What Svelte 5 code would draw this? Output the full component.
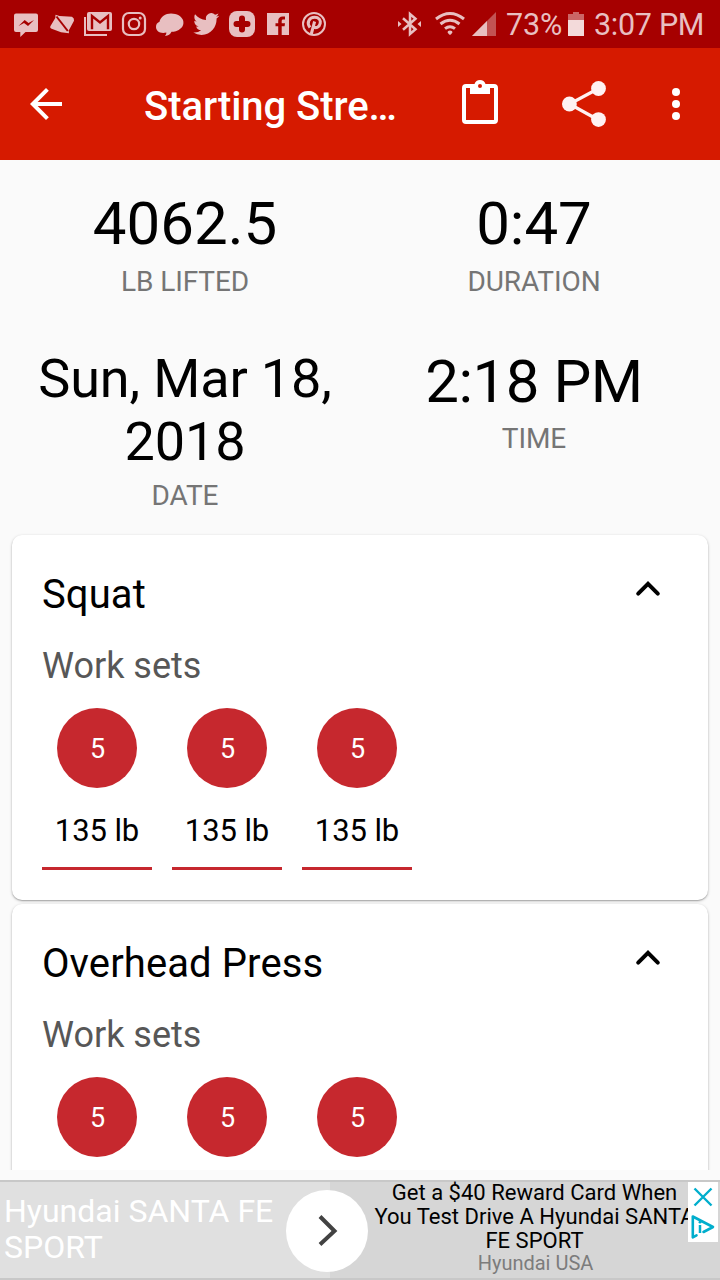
<script>
  const stats = [
    { value: '4062.5', label: 'LB LIFTED' },
    { value: '0:47', label: 'DURATION' },
    { value: 'Sun, Mar 18, 2018', label: 'DATE', small: true },
    { value: '2:18 PM', label: 'TIME', tight: true }
  ];
  const exercises = [
    { name: 'Squat', sets: [5, 5, 5], weight: '135 lb' },
    { name: 'Overhead Press', sets: [5, 5, 5] }
  ];
</script>

<div class="screen">
  <div class="status">
    <div class="notes">
      <svg viewBox="0 0 36 48"><path fill="currentColor" d="M8 13.500h20q2 0 2 2V30q0 2-2 2H17.500l-5.200 5V32H8q-2 0-2-2V15.500q0-2 2-2z"/><path fill="#a60000" d="M10.500 26l6.200-6 3.800 3 5.500-3-6 6-4-3z"/></svg>
      <svg viewBox="0 0 36 48"><path fill="currentColor" d="M11.500 14.800l4 1.200 12.500.7q2.500 1.300 2 4L25.700 28.700l-1 1.800.3 2.700-8-1-8.700-3.200q-3-1-1.800-3L11.300 18z"/><path d="M12.500 16.500L23.800 31" stroke="#a60000" stroke-width="2"/></svg>
      <svg viewBox="0 0 36 48"><path fill="none" stroke="currentColor" stroke-width="2" d="M5 17v18h22"/><rect x="7" y="12" width="25" height="19" rx="2" fill="currentColor"/><path d="M12 29.200V16l8 6.500 8-6.500v13.200" fill="none" stroke="#a60000" stroke-width="2.400"/></svg>
      <svg viewBox="0 0 36 48"><rect x="7" y="13" width="22" height="22" rx="6" fill="none" stroke="currentColor" stroke-width="2.200"/><circle cx="18" cy="24" r="5.200" fill="none" stroke="currentColor" stroke-width="2.200"/><circle cx="24.200" cy="18" r="1.500" fill="currentColor"/></svg>
      <svg viewBox="0 0 36 48"><path fill="currentColor" d="M19 13.500c6 0 10.500 2.800 12 6.500 1.500 5-1 8.500-6 10.800-2 1-4 1.200-5.500 1-1.300 2.500-3 3.900-6.500 4.200 1-1 1.500-2.300 1.300-3.400C8 34 4 31 4 27c0-2.500 1-4.200 3.500-5.200 1-5 6-8.300 11.500-8.300z"/></svg>
      <svg viewBox="0 0 36 48"><path fill="currentColor" transform="translate(5.300 10.600) scale(1.080 1.120)" d="M23.953 4.570a10 10 0 01-2.825.775 4.958 4.958 0 002.163-2.723c-.951.555-2.005.959-3.127 1.184a4.920 4.920 0 00-8.384 4.482C7.690 8.095 4.067 6.130 1.640 3.162a4.822 4.822 0 00-.666 2.475c0 1.710.870 3.213 2.188 4.096a4.904 4.904 0 01-2.228-.616v.060a4.923 4.923 0 003.946 4.827 4.996 4.996 0 01-2.212.085 4.936 4.936 0 004.604 3.417 9.867 9.867 0 01-6.102 2.105c-.390 0-.779-.023-1.170-.067a13.995 13.995 0 007.557 2.209c9.053 0 13.998-7.496 13.998-13.985 0-.210 0-.420-.015-.630A9.935 9.935 0 0024 4.590z"/></svg>
      <svg viewBox="0 0 36 48"><rect x="5" y="11" width="26" height="26" rx="8" fill="currentColor"/><path d="M18 18.500v11M12.500 24h11" stroke="#a60000" stroke-width="6" stroke-linecap="round"/></svg>
      <svg viewBox="0 0 36 48"><path fill="currentColor" d="M7 13h22v22H7z"/><path fill="#a60000" d="M18.200 35v-8.700h-2.700v-3.100h2.700v-2.100c0-3.200 1.700-4.700 4.500-4.700H25v3h-1.600c-1.300 0-1.700.6-1.700 1.700v2.100H25l-.4 3.100h-2.900V35z"/></svg>
      <svg viewBox="0 0 36 48"><circle cx="18" cy="24" r="11" fill="none" stroke="currentColor" stroke-width="2"/><path d="M14 27.500c-4-5-.5-10.300 4.500-10.300 4.400 0 6.400 3 5.700 6.200-.8 4-4.700 5.400-6.800 3M18.600 21.500L15.300 34" fill="none" stroke="currentColor" stroke-width="3"/></svg>
    </div>
    <div class="system">
      <svg class="bt" viewBox="0 0 24 48"><path d="M5 18.300l12.500 10.900L12 34V14l5.500 4.800L5 29.700" fill="none" stroke="currentColor" stroke-width="2.500"/><path fill="currentColor" d="M0 21l3.500 3L0 27zM23 21l-3.500 3 3.500 3z"/></svg>
      <svg class="wifi" viewBox="0 0 30 48"><g fill="none" stroke="currentColor" stroke-width="3"><path d="M1 19q14-11 28 0M5.500 24q9.500-7.500 19 0M10 28.700q5-4 10 0"/></g><path fill="currentColor" d="M15 30.500q2.500 0 2.500 1.800Q16 35 15 35t-2.500-2.700q0-1.800 2.500-1.800z"/></svg>
      <svg class="signal" viewBox="0 0 24 48"><path fill="#c25353" d="M24 12v24H0z"/><path fill="currentColor" d="M15 21v15H0z"/></svg>
      <span class="pct">73%</span>
      <svg class="battery" viewBox="0 0 16 48"><path fill="#cb6666" d="M0 14h5v-2h6v2h5v6H0z"/><path fill="#f3dada" d="M0 20h16v16H0z"/></svg>
      <span class="clock">3:07 PM</span>
    </div>
  </div>

  <header>
    <svg class="back" viewBox="0 0 24 24"><path fill="#fff" d="M20 11H7.830l5.590-5.590L12 4l-8 8 8 8 1.410-1.410L7.830 13H20z"/></svg>
    <h1>Starting Stre…</h1>
    <svg class="clip" viewBox="0 0 36 44"><path fill="#fff" fill-rule="evenodd" d="M4 4h8.500a5.800 5.800 0 0 1 11 0H32q4 0 4 4v32q0 4-4 4H4q-4 0-4-4V8q0-4 4-4zm0 4v32h28V8h-4v6H8V8zM18 4a2 2 0 1 0 0 4 2 2 0 0 0 0-4z"/></svg>
    <svg class="share" viewBox="0 0 44 46"><path d="M36.500 7.500L7.500 23l29 16" fill="none" stroke="#fff2f2" stroke-width="3.200"/><g fill="#fff2f2"><circle cx="36.500" cy="7.500" r="7.400"/><circle cx="7.400" cy="23" r="7.400"/><circle cx="36.500" cy="38.600" r="7.400"/></g></svg>
    <svg class="more" viewBox="0 0 8 32"><g fill="#fff"><circle cx="4" cy="4" r="4"/><circle cx="4" cy="16" r="4"/><circle cx="4" cy="28" r="4"/></g></svg>
  </header>

  <main>
    <section class="stats">
      {#each stats as s}
        <div class="stat">
          <div class="value" class:small={s.small} class:tight={s.tight}>{s.value}</div>
          <div class="label">{s.label}</div>
        </div>
      {/each}
    </section>
    {#each exercises as e}
      <article>
        <div class="head">
          <h2>{e.name}</h2>
          <svg viewBox="0 0 24 24"><path d="M7.100 14.300L12 9.400l4.900 4.900" fill="none" stroke="#000" stroke-width="2" stroke-linecap="round"/></svg>
        </div>
        <h3>Work sets</h3>
        <div class="sets">
          {#each e.sets as reps}
            <div class="set">
              <div class="reps">{reps}</div>
              {#if e.weight}<div class="weight">{e.weight}</div>{/if}
            </div>
          {/each}
        </div>
      </article>
    {/each}
  </main>

  <aside>
    <div class="brand">Hyundai SANTA FE<br />SPORT</div>
    <div class="copy">
      <div class="offer">Get a $40 Reward Card When<br />You Test Drive A Hyundai SANTA<br />FE SPORT</div>
      <div class="by">Hyundai USA</div>
    </div>
    <div class="go"><svg viewBox="0 0 82 82"><path d="M34 26.500L48.500 41 34 54.500" fill="none" stroke="#424242" stroke-width="4"/></svg></div>
    <div class="choices">
      <svg viewBox="0 0 30 60"><g fill="none" stroke="#00aecd"><path stroke-width="2.400" d="M6.500 6.500l17 17M23.500 6.500l-17 17"/><path stroke-width="2.600" stroke-linejoin="round" stroke-linecap="round" d="M8.500 53.300L4.800 55.300V34.500L25 45l-9.500 5"/><path stroke-width="2.500" d="M12 43v8"/></g><circle cx="12" cy="40.200" r="1.400" fill="#00aecd"/></svg>
    </div>
  </aside>
</div>

<style>
  :global(body) { margin: 0; }
  .screen { width: 720px; height: 1280px; overflow: hidden; display: flex; flex-direction: column; background: #fafafa; font-family: Roboto, sans-serif; color: #000; }
  svg { display: block; flex: none; }
  h1, h2, h3 { margin: 0; font-weight: 400; }
  .status { height: 48px; flex: none; background: #a60000; color: #e8bfc1; display: flex; justify-content: space-between; padding: 0 16px 0 8px; }
  .notes, .system { display: flex; }
  .notes svg { width: 36px; height: 48px; }
  .system svg { height: 48px; }
  .system span { font-size: 30.500px; line-height: 50px; white-space: nowrap; }
  .bt { width: 24px; margin-right: 13px; }
  .wifi { width: 30px; margin-right: 7px; }
  .signal { width: 24px; margin-right: 10px; }
  .pct { width: 55px; margin-right: 7px; letter-spacing: -.2px; }
  .battery { width: 16px; margin-right: 10px; }
  .system .clock { width: 110px; letter-spacing: -.3px; }
  header { height: 112px; flex: none; background: #d61a00; display: flex; align-items: center; padding-left: 22px; }
  .back { width: 48px; height: 48px; }
  h1 { width: 318px; margin-left: 74px; padding-top: 6px; color: #fff; font-weight: 500; font-size: 40px; line-height: 48px; white-space: nowrap; letter-spacing: -.06px; }
  .clip { width: 36px; height: 44px; margin-top: -4px; }
  .share { width: 44px; height: 46px; margin-left: 64px; }
  .more { width: 8px; height: 32px; margin-left: 66px; }
  main { height: 1010px; flex: none; overflow: hidden; }
  .stats { display: grid; grid-template-columns: 350px 348px; padding: 28px 0 0 10px; height: 347px; grid-template-rows: 158px 189px; }
  .stat { text-align: center; }
  .value { font-size: 60px; line-height: 72px; padding-bottom: 5px; }
  .value.tight { letter-spacing: -.5px; padding-bottom: 4px; }
  .value.small { font-size: 54px; line-height: 63px; padding: 1px 25px 6px; letter-spacing: -.15px; }
  .label { font-size: 28px; line-height: 33px; color: #757575; letter-spacing: -.1px; }
  article { height: 365px; margin: 0 12px 4px; background: #fff; border-radius: 10px; box-shadow: 0 1px 3px rgba(0,0,0,.26), 0 1px 1px rgba(0,0,0,.16); padding: 30px; box-sizing: border-box; }
  .head { display: flex; justify-content: space-between; height: 77px; }
  h2 { font-size: 40px; line-height: 60px; letter-spacing: .1px; }
  .head svg { width: 48px; height: 48px; margin-right: 6px; }
  h3 { font-size: 36px; line-height: 48px; color: #575757; height: 66px; }
  .sets { display: flex; gap: 20px; }
  .set { width: 110px; height: 162px; box-sizing: border-box; border-bottom: 3px solid #c6282e; }
  .reps { width: 80px; height: 80px; margin: 0 auto; border-radius: 50%; background: #c6282e; color: #fff; font-size: 27px; line-height: 83px; text-align: center; text-indent: 1px; }
  .weight { font-size: 31px; line-height: 40px; margin-top: 23px; text-align: center; letter-spacing: -.1px; }
  aside { position: relative; height: 100px; margin-top: 10px; box-sizing: border-box; border-top: 2px solid #c8c8c8; border-bottom: 2px solid #c8c8c8; display: flex; flex: none; }
  .brand { width: 330px; box-sizing: border-box; padding: 11px 0 0 4px; background: #e0e0e0; color: #fff; font-size: 32px; line-height: 36px; white-space: nowrap; }
  .copy { flex: 1; background: #d6d6d6; text-align: center; padding: 0 13px 0 34px; white-space: nowrap; }
  .offer { font-size: 22px; line-height: 24px; margin: -1px -9px 0 -11px; letter-spacing: .02px; }
  .by { font-size: 20px; line-height: 20px; color: #7c7c7c; }
  .go { position: absolute; left: 286px; top: 8px; width: 82px; height: 82px; border-radius: 50%; background: #fff; }
  .choices { position: absolute; right: 2px; top: 0; width: 30px; height: 60px; background: #fff; }
</style>
